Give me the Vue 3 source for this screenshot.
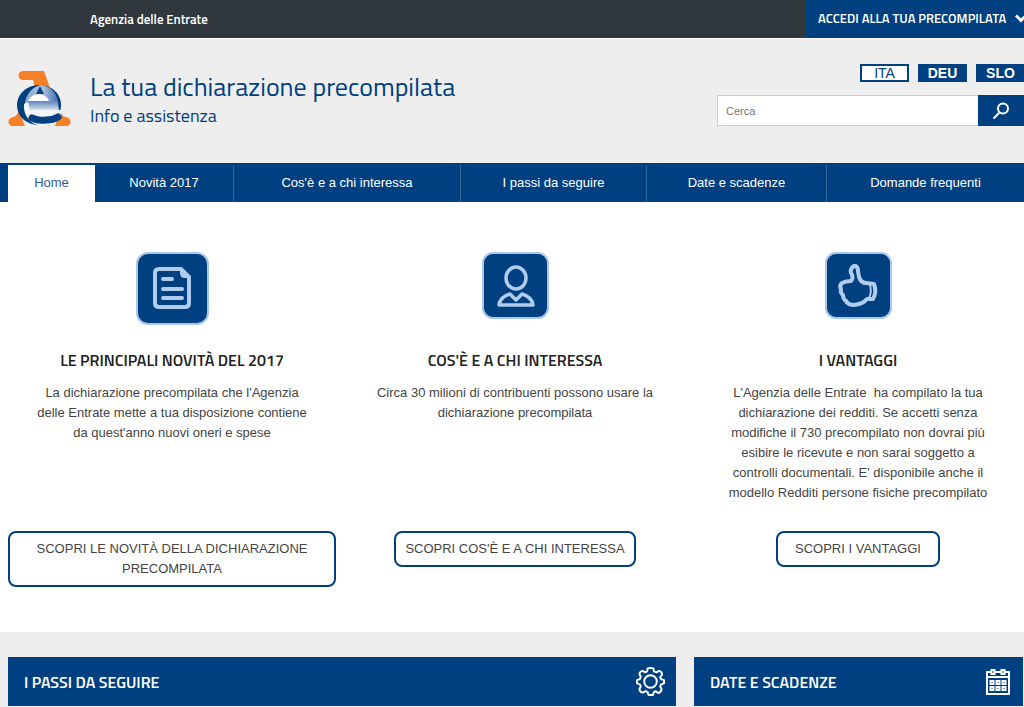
<script setup>
const languages = [
  { code: 'ITA', current: true },
  { code: 'DEU', current: false },
  { code: 'SLO', current: false },
]

const menu = [
  { label: 'Home', current: true },
  { label: 'Novità 2017' },
  { label: "Cos'è e a chi interessa" },
  { label: 'I passi da seguire' },
  { label: 'Date e scadenze' },
  { label: 'Domande frequenti' },
]

const features = [
  {
    icon: 'document',
    title: 'LE PRINCIPALI NOVITÀ DEL 2017',
    text: "La dichiarazione precompilata che l'Agenzia delle Entrate mette a tua disposizione contiene da quest'anno nuovi oneri e spese",
    action: 'SCOPRI LE NOVITÀ DELLA DICHIARAZIONE PRECOMPILATA',
  },
  {
    icon: 'person',
    title: "COS'È E A CHI INTERESSA",
    text: 'Circa 30 milioni di contribuenti possono usare la dichiarazione precompilata',
    action: "SCOPRI COS'È E A CHI INTERESSA",
  },
  {
    icon: 'thumb',
    title: 'I VANTAGGI',
    text: "L'Agenzia delle Entrate \u00a0ha compilato la tua dichiarazione dei redditi. Se accetti senza modifiche il 730 precompilato non dovrai più esibire le ricevute e non sarai soggetto a controlli documentali. E' disponibile anche il modello Redditi persone fisiche precompilato",
    action: 'SCOPRI I VANTAGGI',
  },
]
</script>

<template>
  <div class="page">
    <div class="topbar">
      <a class="agency" href="#">Agenzia delle Entrate</a>
      <a class="login" href="#">
        <span>ACCEDI ALLA TUA PRECOMPILATA</span>
        <svg class="chevron" viewBox="0 0 14 10" aria-hidden="true"><path d="M2 2.5 7 7.5 12 2.5" /></svg>
      </a>
    </div>

    <header class="header">
      <svg class="logo" viewBox="0 0 63 55" role="img" aria-label="Agenzia delle Entrate">
        <defs>
          <linearGradient id="silver" x1="0" y1="0" x2="1" y2="0">
            <stop offset="0" stop-color="#7f9dca" />
            <stop offset="0.5" stop-color="#b4c5e0" />
            <stop offset="1" stop-color="#3f69ab" />
          </linearGradient>
          <linearGradient id="bar" x1="0" y1="0" x2="0" y2="1">
            <stop offset="0" stop-color="#5f84bd" />
            <stop offset="1" stop-color="#d5deed" />
          </linearGradient>
        </defs>
        <path fill="#f58025" d="M15 0H36L42 17H27L25 9H15A4.5 4.5 0 0 1 15 0Z" />
        <path fill="#f58025" d="M11 40 17 55H5C-1 55-1 47 5 46 8 46 9 43 11 40ZM52 40 47 55H58C64 55 64 47 58 46 55 46 54 43 52 40Z" />
        <path fill="#004080" d="M31 14C44 14 53 23 53 34 53 46 43 54 31 54 18 54 9 45 9 34 9 23 19 14 31 14Z" />
        <path fill="url(#silver)" d="M32 14C45 15 51 25 51 39H17C15 27 22 17 32 14Z" />
        <path fill="#ffffff" d="M20 30C23 21 38 21 41 30Z" />
        <path fill="url(#bar)" d="M20 30H49L51 39H18Z" />
        <path fill="#f2f4f8" d="M16 33 20 31 22 39H54C54 46 48 54 36 55 25 55 15 47 16 33Z" />
        <path fill="#004080" d="M32 15 36 23H28Z" />
        <path fill="none" stroke="#004080" stroke-width="7" stroke-linecap="round" d="M24 47Q30 50 38 49 45 49 50 46" />
      </svg>
      <div class="titles">
        <h1>La tua dichiarazione precompilata</h1>
        <p>Info e assistenza</p>
      </div>
      <div class="tools">
        <nav class="languages" aria-label="Lingua">
          <a v-for="l in languages" :key="l.code" href="#" :class="{ current: l.current }">{{ l.code }}</a>
        </nav>
        <form class="search" role="search" @submit.prevent>
          <input type="search" placeholder="Cerca" aria-label="Cerca" />
          <button type="submit" aria-label="Avvia la ricerca">
            <svg viewBox="0 0 18 18" aria-hidden="true"><circle cx="11" cy="6.5" r="5" /><path d="M7.5 10.5 1.5 16.5" /></svg>
          </button>
        </form>
      </div>
    </header>

    <nav class="menu" aria-label="Menu principale">
      <a v-for="m in menu" :key="m.label" href="#" :class="{ current: m.current }">{{ m.label }}</a>
    </nav>

    <main class="features">
      <section v-for="f in features" :key="f.icon" class="feature">
        <div class="art">
          <svg v-if="f.icon === 'document'" class="tile large" viewBox="0 0 73 73" aria-hidden="true">
            <rect class="plate" x="1" y="1" width="71" height="71" rx="11" />
            <path class="line" d="M23 17H45L53 25V51Q53 55 49 55H23Q19 55 19 51V21Q19 17 23 17Z" />
            <path class="fill" d="M44 16V21Q44 26 49 26H54Z" />
            <path class="line" d="M27 27H36M27 37H46M27 46H46" />
          </svg>
          <svg v-else-if="f.icon === 'person'" class="tile" viewBox="0 0 67 67" aria-hidden="true">
            <rect class="plate" x="1" y="1" width="65" height="65" rx="10" />
            <ellipse class="line slim" cx="34" cy="26" rx="10" ry="11" />
            <path class="line slim" d="M28 42 34 48 40 42Q50 45 51 53H17Q18 45 28 42Z" />
          </svg>
          <svg v-else class="tile" viewBox="0 0 67 67" aria-hidden="true">
            <rect class="plate" x="1" y="1" width="65" height="65" rx="10" />
            <path class="line" d="M27 16C29 12 33 14 33 19L34 25Q36 31 41 31L49 32Q52 40 48 47L42 47Q38 52 29 53 23 53 21 49 18 47 18 43 15 41 16 37 14 34 17 31 21 29 26 29 29 25 26 21Q25 18 27 16Z" />
            <path class="line thin" d="M45 33Q47 40 44 46" />
          </svg>
        </div>
        <h2>{{ f.title }}</h2>
        <p>{{ f.text }}</p>
        <a class="action" href="#">{{ f.action }}</a>
      </section>
    </main>

    <div class="panels">
      <section class="panel">
        <h2>I PASSI DA SEGUIRE</h2>
        <svg class="gear" viewBox="0 0 30 30" aria-hidden="true">
          <circle cx="15" cy="15" r="6.5" />
          <path d="M12 1.500Q15 .5 18 1.500L18.500 4.500 21 5.500 24 4Q27 5 27 8L25 10.500 26 12.500 29 13.500V17L26 18 25 20 26.500 23Q26 26 23 27L20.500 25 18.500 26 17.500 29H13L12 26 10 25 7 26.500Q4 26 3.500 23L5 20 4 18 1 17V13.500L4 12.500 5 10 3.500 7.500Q4 4.500 7 4L9.500 5.500 11.500 4.500Z" />
        </svg>
      </section>
      <section class="panel">
        <h2>DATE E SCADENZE</h2>
        <svg class="calendar" viewBox="0 0 24 26" aria-hidden="true">
          <path d="M5 3H1V25H23V3H19M9 3H15M1 8H23" />
          <path d="M5.5 1H8.5V5H5.5ZM15.5 1H18.5V5H15.5Z" />
          <path d="M4.5 12H7.5V15H4.5ZM10.5 12H13.5V15H10.5ZM16.5 12H19.5V15H16.5ZM4.5 18H7.5V21H4.5ZM10.5 18H13.5V21H10.5ZM16.5 18H19.5V21H16.5Z" />
        </svg>
      </section>
    </div>
  </div>
</template>

<style>
body {
  margin: 0;
  background: #fff;
}
</style>

<style scoped>
* {
  box-sizing: border-box;
}
.page {
  overflow: hidden;
  font-family: "Liberation Sans", Arial, sans-serif;
  font-size: 13px;
  line-height: 20px;
  color: #444;
}
a {
  color: inherit;
  text-decoration: none;
}
h1,
h2,
p {
  margin: 0;
}
h1,
h2,
.titles p,
.agency,
.login {
  font-family: "Titillium Web", Roboto, sans-serif;
}
svg {
  display: block;
  flex: none;
}
.topbar {
  display: flex;
  justify-content: space-between;
  height: 39px;
  padding-left: 90px;
  background: #30373d;
  border-bottom: 1px solid #fff;
  color: #fff;
}
.agency {
  font-size: 13px;
  font-weight: 600;
  line-height: 38px;
}
.login {
  display: flex;
  flex: none;
  align-items: center;
  gap: 6px;
  width: 218px;
  padding: 0 0 2px 12px;
  background: #004080;
  font-weight: 600;
  font-size: 13px;
  white-space: nowrap;
}
.login span {
  flex: none;
  width: 190px;
}
.chevron {
  width: 14px;
  fill: none;
  stroke: #fff;
  stroke-width: 3;
}
.header {
  display: flex;
  align-items: flex-start;
  height: 124px;
  padding: 25px 0 0 8px;
  background: #eee;
}
.logo {
  width: 63px;
  margin-top: 7px;
}
.titles {
  flex: 1;
  padding: 8px 0 0 19px;
  color: #004080;
}
.titles h1 {
  font-size: 26px;
  font-weight: 400;
  line-height: 30px;
}
.titles p {
  font-size: 18px;
  line-height: 28px;
}
.tools {
  flex: none;
  width: 307px;
}
.languages {
  display: flex;
  justify-content: flex-end;
  gap: 9px;
  margin-right: -1px;
}
.languages a {
  width: 49px;
  border: 2px solid #004080;
  background: #004080;
  color: #fff;
  font-size: 14px;
  font-weight: 700;
  line-height: 14px;
  text-align: center;
}
.languages .current {
  background: #fff;
  color: #004080;
  font-weight: 400;
}
.search {
  display: flex;
  height: 31px;
  margin-top: 13px;
}
.search input {
  flex: 1;
  min-width: 0;
  padding: 0 8px;
  border: 1px solid #ccc;
  border-right: 0;
  border-radius: 0;
  background: #fff;
  font-family: inherit;
  font-size: 11px;
}
.search input::placeholder {
  color: #777;
}
.search button {
  display: grid;
  place-items: center;
  width: 46px;
  padding: 0;
  border: 0;
  background: #004080;
}
.search svg {
  width: 18px;
  fill: none;
  stroke: #fff;
  stroke-width: 2;
}
.menu {
  display: grid;
  grid-template-columns: 87fr 139fr 227fr 186fr 180fr 197fr;
  padding: 2px 0 0 8px;
  background: #004080;
  color: #fff;
  text-align: center;
}
.menu a {
  padding: 8px 0 9px;
  border-right: 1px solid #336699;
}
.menu a:last-child {
  border-right: 0;
}
.menu .current {
  border-right: 0;
  background: #fff;
  color: #315d8d;
}
.features {
  display: grid;
  grid-template-columns: repeat(3, 1fr);
  column-gap: 15px;
  padding: 50px 2px 45px 8px;
}
.feature {
  display: grid;
  grid-template-rows: subgrid;
  grid-row: span 4;
  justify-items: center;
  row-gap: 0;
  text-align: center;
}
.art {
  height: 98px;
}
.tile {
  width: 67px;
}
.large {
  width: 73px;
}
.plate {
  fill: #004080;
  stroke: #a9c8ec;
  stroke-width: 2;
}
.line {
  fill: none;
  stroke: #b0cdf0;
  stroke-width: 4;
  stroke-linejoin: round;
  stroke-linecap: round;
}
.slim {
  stroke-width: 3.5;
}
.thin {
  stroke-width: 2;
}
.fill {
  fill: #b0cdf0;
}
.feature h2 {
  margin-bottom: 13px;
  color: #222;
  font-size: 16px;
  font-weight: 600;
  line-height: 20px;
}
.feature p {
  max-width: 280px;
  padding-bottom: 28px;
}
.feature:last-child p {
  max-width: 268px;
}
.action {
  align-self: start;
  padding: 6px 9px;
  border: 2px solid #004080;
  border-radius: 8px;
}
.feature:first-child .action {
  width: 100%;
  padding-inline: 17px;
}
.feature:last-child .action {
  padding-inline: 17px;
}
.panels {
  display: grid;
  grid-template-columns: 668fr 329fr;
  column-gap: 18px;
  padding: 25px 1px 1px 8px;
  background: #eee;
}
.panel {
  display: flex;
  align-items: center;
  justify-content: space-between;
  height: 49px;
  padding: 0 11px 0 16px;
  background: #004080;
  color: #fff;
}
.panel:last-child {
  padding-right: 13px;
}
.panel h2 {
  font-size: 16px;
  font-weight: 600;
}
.panel svg {
  fill: none;
  stroke: #fff;
  stroke-width: 2;
}
.gear {
  width: 29px;
  stroke-linejoin: round;
}
.calendar {
  width: 24px;
}
</style>
